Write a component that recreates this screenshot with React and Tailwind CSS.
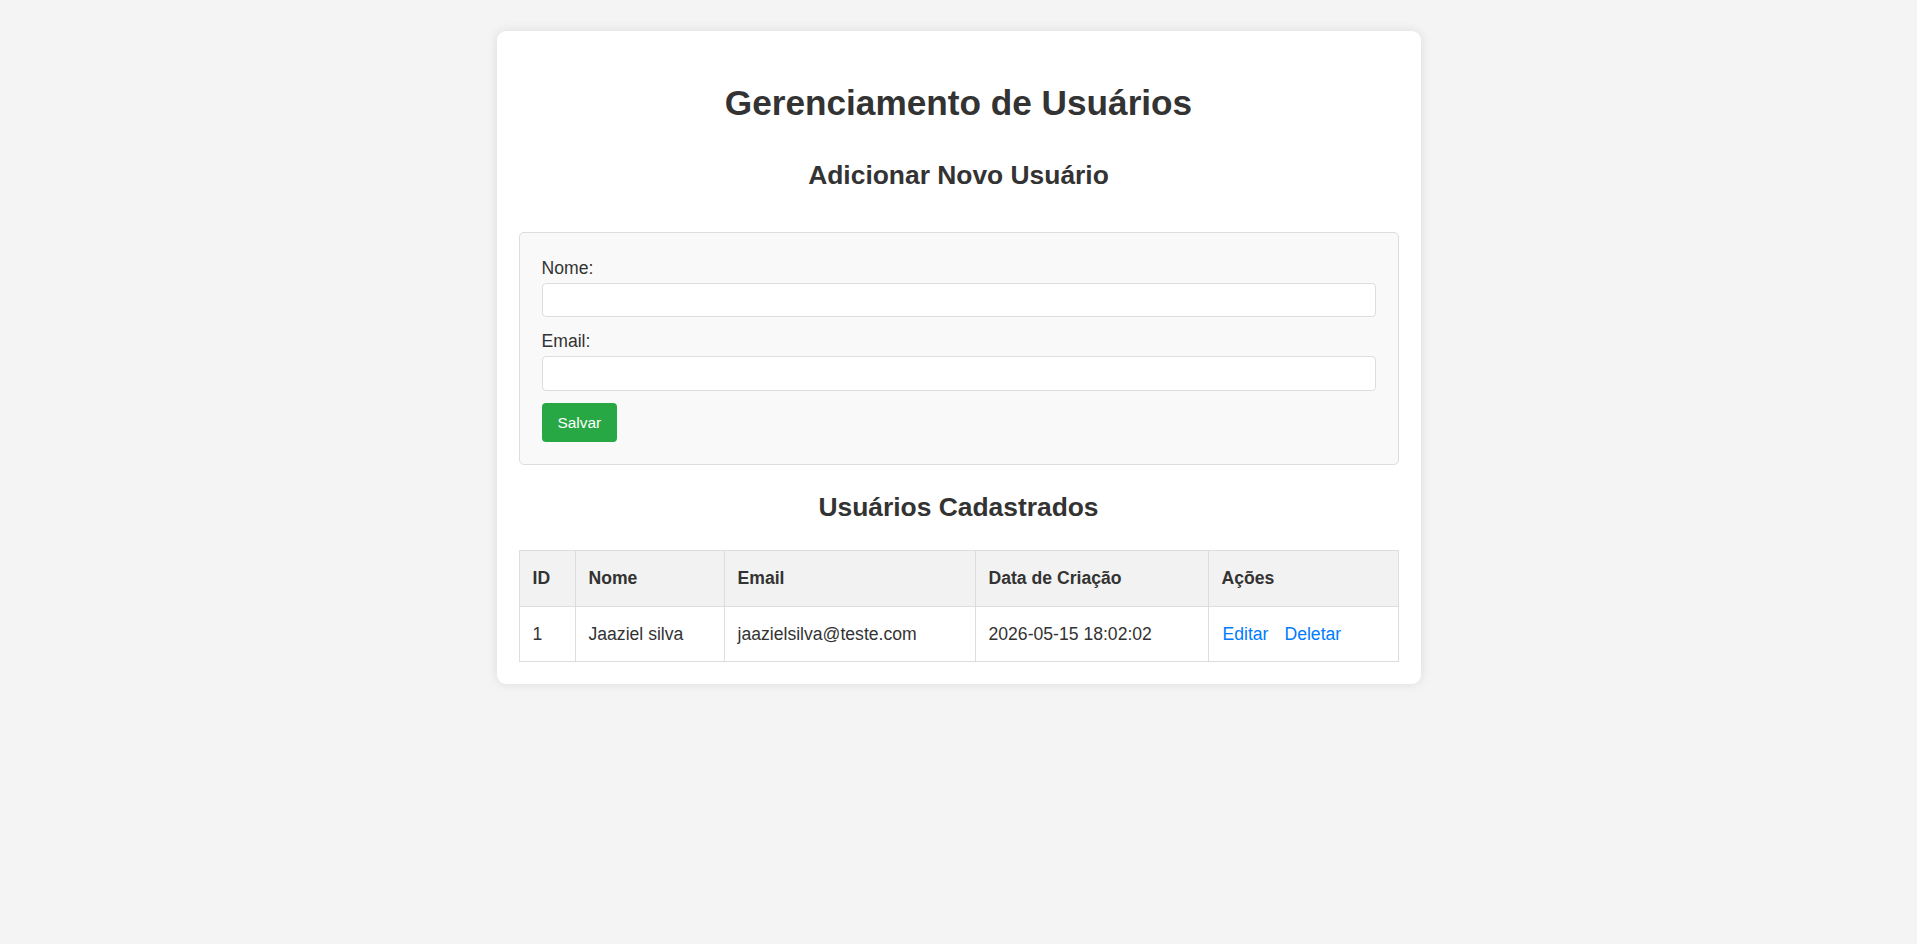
const users = [
  { id: 1, nome: "Jaaziel silva", email: "jaazielsilva@teste.com", criado: "2026-05-15 18:02:02" },
];

const App = () => {
  return (
    <div className="min-h-screen bg-[#f4f4f4] pt-[31px] text-[#333] font-['Liberation_Sans',Arial,sans-serif]">
      <div className="mx-auto w-[924px] rounded-[9px] bg-white px-[22px] pt-[52px] pb-[22px] shadow-[0_0_11px_rgba(0,0,0,0.1)]">
        <h1 className="text-center text-[35.2px] font-bold leading-[40px]">Gerenciamento de Usuários</h1>
        <h2 className="mt-[37px] text-center text-[26.4px] font-bold leading-[30px]">Adicionar Novo Usuário</h2>

        <form className="mt-[42px] rounded-[5px] border border-[#ddd] bg-[#f9f9f9] px-[22px] pt-[25px] pb-[22px]">
          <label className="block text-[17.6px] leading-[20px]">Nome:</label>
          <input type="text" className="mt-[5px] block h-[34px] w-full rounded-[4px] border border-[#ddd] bg-white px-[9px] outline-none" />
          <label className="mt-[14px] block text-[17.6px] leading-[20px]">Email:</label>
          <input type="email" className="mt-[5px] block h-[35px] w-full rounded-[4px] border border-[#ddd] bg-white px-[9px] outline-none" />
          <button type="button" className="mt-[12px] h-[39px] rounded-[4px] bg-[#28a745] px-[16px] text-[15.4px] text-white">
            Salvar
          </button>
        </form>

        <h2 className="mt-[27px] text-center text-[26.4px] font-bold leading-[30px]">Usuários Cadastrados</h2>

        <table className="mt-[28px] w-full border-collapse text-left text-[17.6px]">
          <thead>
            <tr className="bg-[#f2f2f2]">
              <th className="w-[56px] border border-[#ddd] px-[13px] py-[17px] leading-[21px] font-bold">ID</th>
              <th className="w-[149px] border border-[#ddd] px-[13px] py-[17px] leading-[21px] font-bold">Nome</th>
              <th className="w-[251px] border border-[#ddd] px-[13px] py-[17px] leading-[21px] font-bold">Email</th>
              <th className="w-[233px] border border-[#ddd] px-[13px] py-[17px] leading-[21px] font-bold">Data de Criação</th>
              <th className="border border-[#ddd] px-[13px] py-[17px] leading-[21px] font-bold">Ações</th>
            </tr>
          </thead>
          <tbody>
            {users.map((u) => (
              <tr key={u.id}>
                <td className="border border-[#ddd] px-[13px] py-[16px] leading-[22px]">{u.id}</td>
                <td className="border border-[#ddd] px-[13px] py-[16px] leading-[22px]">{u.nome}</td>
                <td className="border border-[#ddd] px-[13px] py-[16px] leading-[22px]">{u.email}</td>
                <td className="border border-[#ddd] px-[13px] py-[16px] leading-[22px]">{u.criado}</td>
                <td className="border border-[#ddd] px-[14px] py-[16px] leading-[22px]">
                  <a href="#" className="mr-[16px] text-[#007bff]">Editar</a>
                  <a href="#" className="text-[#007bff]">Deletar</a>
                </td>
              </tr>
            ))}
          </tbody>
        </table>
      </div>
    </div>
  );
};

export default App;
